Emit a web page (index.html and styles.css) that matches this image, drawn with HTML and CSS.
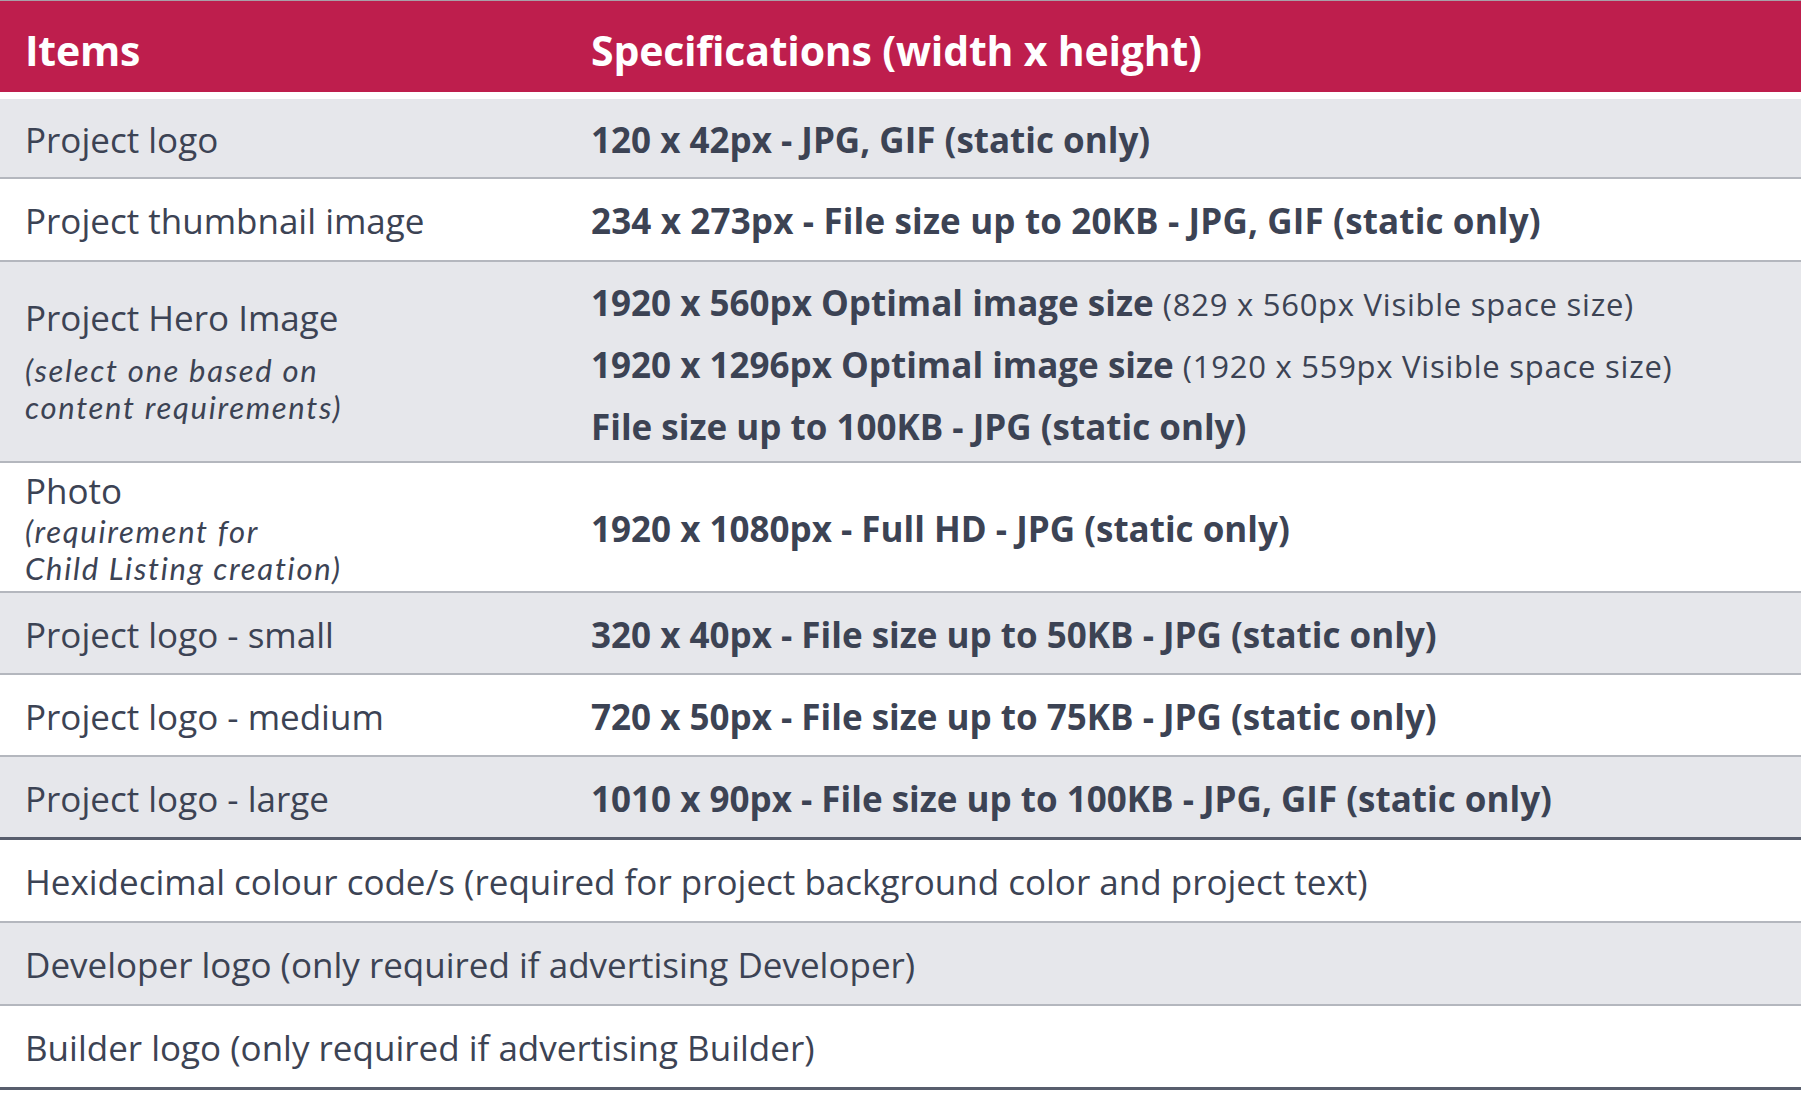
FILE: index.html
```html
<!DOCTYPE html>
<html>
<head>
<meta charset="utf-8">
<link rel="stylesheet" href="styles.css">
</head>
<body>
<table class="spec">
  <colgroup><col class="c1"><col class="c2"></colgroup>
  <thead>
    <tr><th>Items</th><th class="sp">Specifications (width x height)</th></tr>
  </thead>
  <tbody>
    <tr class="g r1"><td>Project logo</td><td class="sp b">120 x 42px - JPG, GIF (static only)</td></tr>
    <tr class="w"><td>Project thumbnail image</td><td class="sp b wide">234 x 273px - File size up to 20KB - JPG, GIF (static only)</td></tr>
    <tr class="g hero">
      <td>
        <div class="title">Project Hero Image</div>
        <div class="notes hero-note">
          <div class="note">(select one based on</div>
          <div class="note">content requirements)</div>
        </div>
      </td>
      <td class="sp hero-spec">
        <div class="line b">1920 x 560px Optimal image size <span class="small">(829 x 560px Visible space size)</span></div>
        <div class="line b">1920 x 1296px Optimal image size <span class="small">(1920 x 559px Visible space size)</span></div>
        <div class="line b">File size up to 100KB - JPG (static only)</div>
      </td>
    </tr>
    <tr class="w photo">
      <td>
        <div class="title">Photo</div>
        <div class="notes">
          <div class="note">(requirement for</div>
          <div class="note">Child Listing creation)</div>
        </div>
      </td>
      <td class="sp b">1920 x 1080px - Full HD - JPG (static only)</td>
    </tr>
    <tr class="g mid"><td>Project logo - small</td><td class="sp b">320 x 40px - File size up to 50KB - JPG (static only)</td></tr>
    <tr class="w mid"><td>Project logo - medium</td><td class="sp b">720 x 50px - File size up to 75KB - JPG (static only)</td></tr>
    <tr class="g end mid"><td>Project logo - large</td><td class="sp b">1010 x 90px - File size up to 100KB - JPG, GIF (static only)</td></tr>
    <tr class="w"><td colspan="2">Hexidecimal colour code/s (required for project background color and project text)</td></tr>
    <tr class="g"><td colspan="2">Developer logo (only required if advertising Developer)</td></tr>
    <tr class="w end"><td colspan="2">Builder logo (only required if advertising Builder)</td></tr>
  </tbody>
</table>
</body>
</html>
```
FILE: styles.css
```css
html, body {
  margin: 0;
  padding: 0;
  background: #ffffff;
}
body {
  font-family: "Open Sans", "Liberation Sans", sans-serif;
  color: #3c4354;
}
.spec {
  width: 1801px;
  border-collapse: collapse;
  table-layout: fixed;
}
.c1 { width: 566px; }
.spec th {
  background: #be1e4d;
  color: #ffffff;
  font-weight: 700;
  font-size: 41px;
  text-align: left;
  height: 85px;
  padding: 6px 0 0 25px;
  border-top: 1px solid #a8a0a8;
  border-bottom: 7px solid #ffffff;
  letter-spacing: -0.2px;
}
.spec td {
  font-size: 35px;
  padding: 2px 0 0 25px;
  height: 79px;
  vertical-align: middle;
  border-bottom: 2px solid #b4b7be;
}
.spec tr.r1 td { height: 76px; }
.spec tr.mid td { height: 78px; }
.g td { background: #e6e7eb; }
.w td { background: #ffffff; }
.spec tr.end td { border-bottom: 3px solid #585e6d; }
.b {
  font-weight: 700;
}
.spec td.b { font-size: 35px; }
.spec td.wide { letter-spacing: 0.15px; }
.spec td.hero-spec { padding-top: 6px; }
.line {
  font-size: 35px;
  height: 62px;
  line-height: 62px;
}
.small {
  font-weight: 400;
  font-size: 31px;
  letter-spacing: 0.75px;
}
.spec tr.hero td { height: 193px; }
.spec tr.photo td { height: 126px; }
.title {
  height: 42px;
  line-height: 42px;
}
.note {
  font-family: Lato, "Open Sans", sans-serif;
  font-style: italic;
  font-size: 31px;
  height: 37px;
  line-height: 37px;
  letter-spacing: 1.7px;
}
.notes { padding-top: 1px; }
.hero-note { margin-top: 12px; }
.hero .title { margin-top: -2px; }
```
